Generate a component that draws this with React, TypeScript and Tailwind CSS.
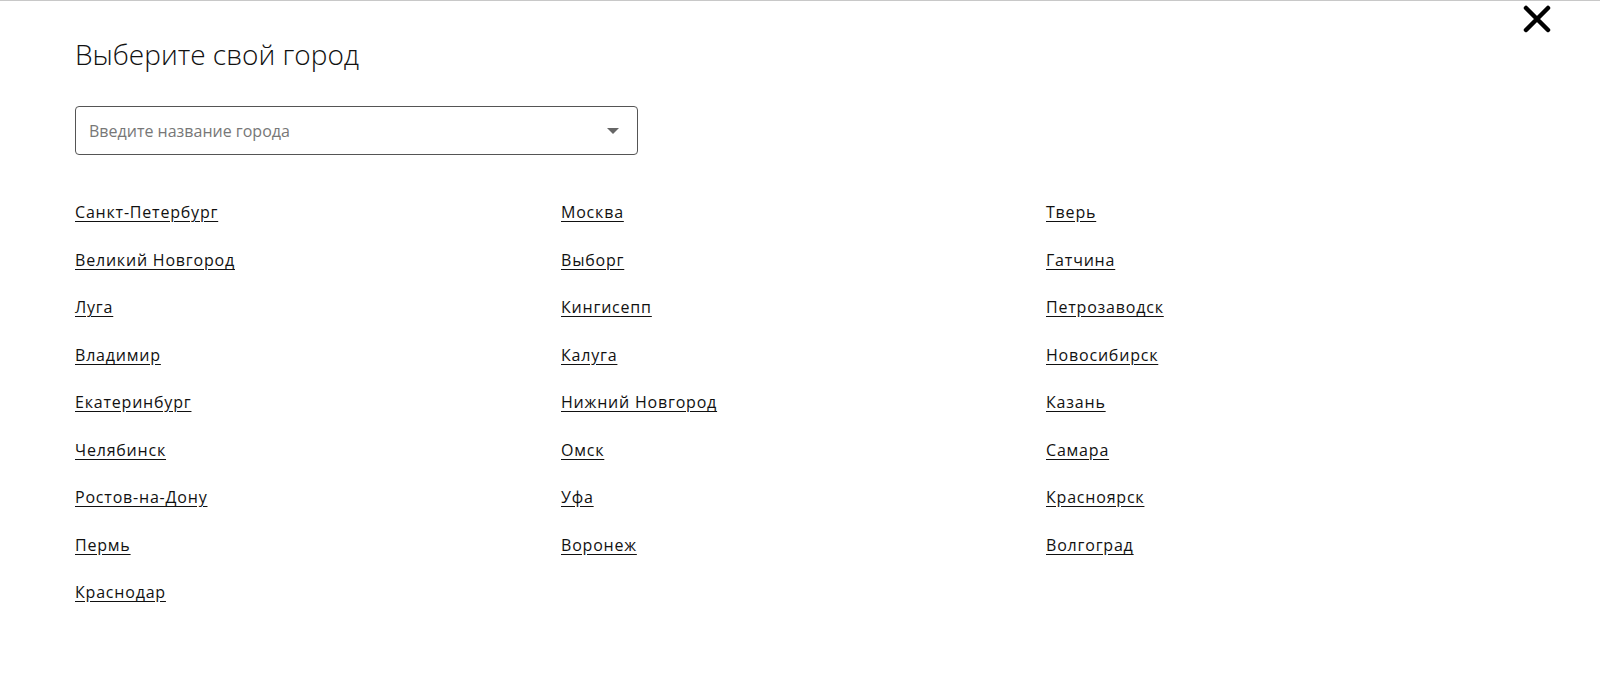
const columns: string[][] = [
  ['Санкт-Петербург', 'Великий Новгород', 'Луга', 'Владимир', 'Екатеринбург', 'Челябинск', 'Ростов-на-Дону', 'Пермь', 'Краснодар'],
  ['Москва', 'Выборг', 'Кингисепп', 'Калуга', 'Нижний Новгород', 'Омск', 'Уфа', 'Воронеж'],
  ['Тверь', 'Гатчина', 'Петрозаводск', 'Новосибирск', 'Казань', 'Самара', 'Красноярск', 'Волгоград'],
];

export default function App() {
  return (
    <div className="relative min-h-[689px] border-t border-[#c8c8c8] bg-white font-['Open_Sans',sans-serif] text-[#111]">
      {/* Close */}
      <button aria-label="Закрыть" className="absolute right-[49px] top-[3px] flex h-[29px] w-[29px] items-center justify-center">
        <svg width="28" height="28" viewBox="0 0 28 28">
          <path d="M3 3 L25 25 M25 3 L3 25" stroke="#000" strokeWidth="4.5" strokeLinecap="round" />
        </svg>
      </button>

      <div className="px-[75px] pt-[35px]">
        <h2 className="text-[28px] font-light leading-[36px]">Выберите свой город</h2>

        {/* Search */}
        <div className="mt-[34px] flex h-[49px] w-[563px] items-center justify-between rounded-[4px] border border-[#555] pl-[13px] pr-[18px]">
          <input
            placeholder="Введите название города"
            className="w-full bg-transparent text-[16px] text-[#333] outline-none placeholder:text-[#777]"
          />
          <svg width="12" height="6" viewBox="0 0 12 6" className="shrink-0">
            <path d="M0 0 H12 L6 6 Z" fill="#666" />
          </svg>
        </div>

        {/* Cities */}
        <div className="mt-[45px] grid grid-cols-[486px_485px_1fr]">
          {columns.map((col, i) => (
            <ul key={i} className="flex flex-col gap-y-[23.5px]">
              {col.map((city) => (
                <li key={city}>
                  <a href="#" className="text-[16px] leading-[24px] tracking-[0.05em] text-[#111] underline underline-offset-[3px]">
                    {city}
                  </a>
                </li>
              ))}
            </ul>
          ))}
        </div>
      </div>
    </div>
  );
}
